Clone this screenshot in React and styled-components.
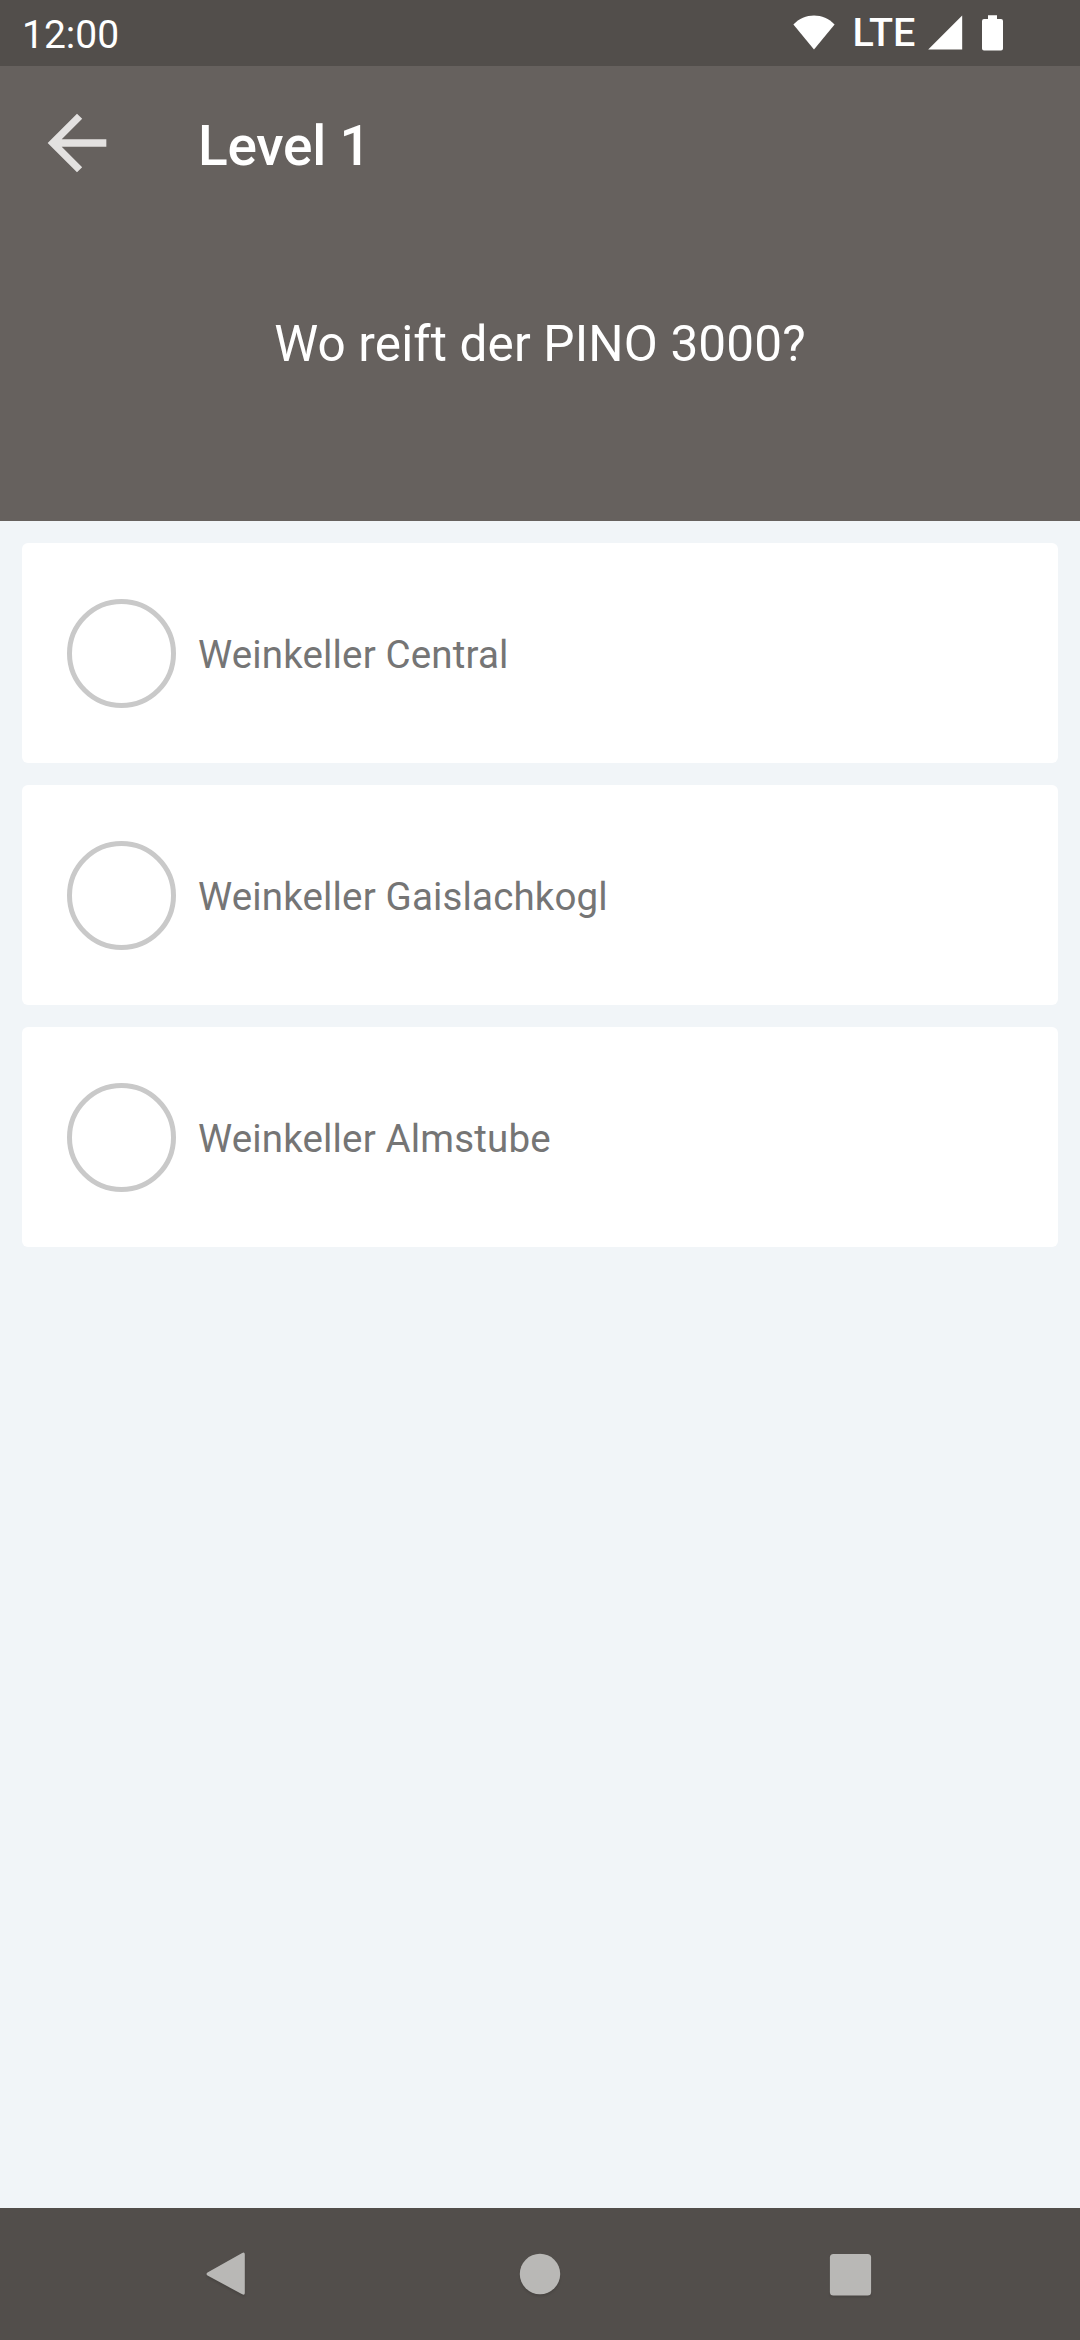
import React, { useState } from 'react'
import styled, { createGlobalStyle } from "styled-components";

const answers = [
  { id: 1, name: 'Weinkeller Central' },
  { id: 2, name: 'Weinkeller Gaislachkogl' },
  { id: 3, name: 'Weinkeller Almstube' },
];

function StatusBar() {
  return (
    <StyledStatus>
      <Clock>12:00</Clock>
      <StatusIcons>
        <svg width="42" height="35" viewBox="0 0 42 35">
          <path d="M21 34.6 L0.4 9.4 C11.5 -2.6 30.5 -2.6 41.6 9.4 Z" fill="#fff" />
        </svg>
        <Network>LTE</Network>
        <Signal width="35" height="35" viewBox="0 0 35 35">
          <path d="M34.2 0.5 V34.5 H0.2 Z" fill="#fff" />
        </Signal>
        <svg width="21" height="36" viewBox="0 0 21 36">
          <path d="M6 0.3 H15 V4 H19 Q21 4 21 6 V33.5 Q21 35.5 19 35.5 H2 Q0 35.5 0 33.5 V6 Q0 4 2 4 H6 Z" fill="#fff" />
        </svg>
      </StatusIcons>
    </StyledStatus>
  )
}

function App() {

  const [selected, setSelected] = useState(null);

  return (
    <Screen>
      <GlobalStyle />
      <StatusBar />
      <Header>
        <Toolbar>
          <BackButton aria-label="Zurück">
            <svg width="88" height="88" viewBox="0 0 24 24">
              <path d="M20 11H7.83l5.59-5.59L12 4l-8 8 8 8 1.41-1.41L7.83 13H20v-2z" fill="#e3e1e0" />
            </svg>
          </BackButton>
          <Title>Level 1</Title>
        </Toolbar>
        <Question>Wo reift der PINO 3000?</Question>
      </Header>
      <AnswerList>
        {answers.map((answer) => (
          <Card key={answer.id} onClick={() => setSelected(answer.id)}>
            <Radio $checked={selected === answer.id} />
            <AnswerText>{answer.name}</AnswerText>
          </Card>
        ))}
      </AnswerList>
      <NavBar>
        <NavButton aria-label="Back">
          <svg width="48" height="48" viewBox="0 0 48 48">
            <path d="M36.2 2.9 Q38.8 1.6 38.8 4.4 V43 Q38.8 45.6 36.2 44.2 L1.5 25.6 Q-0.5 24 1.5 22.4 Z" fill="#b9b8b6" />
          </svg>
        </NavButton>
        <NavButton aria-label="Home">
          <svg width="48" height="48" viewBox="0 0 48 48">
            <circle cx="24" cy="24" r="20.2" fill="#b9b8b6" />
          </svg>
        </NavButton>
        <NavButton aria-label="Recents">
          <svg width="48" height="48" viewBox="0 0 48 48">
            <rect x="3.9" y="4" width="41.2" height="41.4" rx="3.5" fill="#b9b8b6" />
          </svg>
        </NavButton>
      </NavBar>
    </Screen>
  );
}

const GlobalStyle = createGlobalStyle`
  body {
    margin: 0;
    font-family: Roboto, sans-serif;
  }

  * {
    box-sizing: border-box;
  }

  svg {
    display: block;
  }
`;

const Screen = styled.div`
  display: flex;
  flex-direction: column;
  width: 1080px;
  height: 2340px;
  background: #f1f5f8;
`;

const StyledStatus = styled.div`
  display: flex;
  justify-content: space-between;
  height: 66px;
  padding: 0 77px 0 22px;
  background: #524e4b;
  color: #fff;
`;

const Clock = styled.span`
  padding-top: 2px;
  font-size: 39px;
  line-height: 66px;
`;

const StatusIcons = styled.div`
  display: flex;
  align-items: flex-start;
  padding-top: 15px;
`;

const Network = styled.span`
  width: 93px;
  padding-left: 17.5px;
  font-size: 39.5px;
  font-weight: 500;
  line-height: 36px;
`;

const Signal = styled.svg`
  margin-right: 19px;
`;

const Header = styled.header`
  height: 455px;
  background: #66615e;
  color: #fff;
`;

const Toolbar = styled.div`
  display: flex;
  align-items: center;
  height: 154px;
  padding-left: 33px;
`;

const BackButton = styled.button`
  padding: 0;
  border: none;
  background: none;
  cursor: pointer;
`;

const Title = styled.h1`
  margin: 5px 0 0 77px;
  font-size: 55px;
  font-weight: 500;
  line-height: 64px;
  letter-spacing: -0.25px;
`;

const Question = styled.p`
  margin: 95px 0 0;
  font-size: 49.5px;
  line-height: 58px;
  letter-spacing: 0.15px;
  text-align: center;
`;

const AnswerList = styled.main`
  display: flex;
  flex: 1;
  flex-direction: column;
  gap: 22px;
  padding: 22px;
`;

const Card = styled.div`
  display: flex;
  align-items: center;
  height: 220px;
  padding-left: 45px;
  border-radius: 6px;
  background: #fff;
  cursor: pointer;
`;

const Radio = styled.span`
  width: 109px;
  height: 109px;
  margin-top: 1px;
  border: 5px solid #c9c9c9;
  border-radius: 50%;
  background: ${({ $checked }) => ($checked ? '#66615e' : '#fff')};
`;

const AnswerText = styled.span`
  margin-left: 22px;
  padding-top: 2px;
  font-size: 38.5px;
  line-height: 45px;
  letter-spacing: 0.15px;
  color: #757575;
`;

const NavBar = styled.nav`
  display: flex;
  justify-content: space-between;
  align-items: center;
  height: 132px;
  padding: 0 206px;
  background: #524e4b;
`;

const NavButton = styled.button`
  padding: 0;
  border: none;
  background: none;
  filter: drop-shadow(0 2px 1px rgba(0, 0, 0, 0.12));
`;

export default App;
